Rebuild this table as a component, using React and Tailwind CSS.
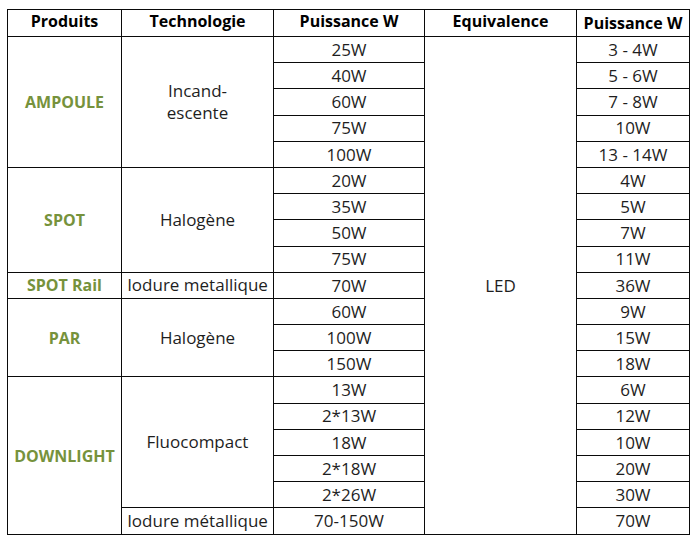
import React from 'react';

const groups = [
  {
    name: 'AMPOULE',
    span: 'row-span-5',
    tech: [{ label: 'Incand-\nescente', span: 'row-span-5' }],
    rows: [
      ['25W', '3 - 4W'],
      ['40W', '5 - 6W'],
      ['60W', '7 - 8W'],
      ['75W', '10W'],
      ['100W', '13 - 14W'],
    ],
  },
  {
    name: 'SPOT',
    span: 'row-span-4',
    tech: [{ label: 'Halogène', span: 'row-span-4' }],
    rows: [
      ['20W', '4W'],
      ['35W', '5W'],
      ['50W', '7W'],
      ['75W', '11W'],
    ],
  },
  {
    name: 'SPOT Rail',
    span: 'row-span-1',
    tech: [{ label: 'Iodure metallique', span: 'row-span-1' }],
    rows: [['70W', '36W']],
  },
  {
    name: 'PAR',
    span: 'row-span-3',
    tech: [{ label: 'Halogène', span: 'row-span-3' }],
    rows: [
      ['60W', '9W'],
      ['100W', '15W'],
      ['150W', '18W'],
    ],
  },
  {
    name: 'DOWNLIGHT',
    span: 'row-span-6',
    tech: [
      { label: 'Fluocompact', span: 'row-span-5' },
      { label: 'Iodure métallique', span: 'row-span-1' },
    ],
    rows: [
      ['13W', '6W'],
      ['2*13W', '12W'],
      ['18W', '10W'],
      ['2*18W', '20W'],
      ['2*26W', '30W'],
      ['70-150W', '70W'],
    ],
  },
];

const cell = 'flex items-center justify-center text-center border-r border-b border-[#0a0a0a]';
const head = `${cell} font-bold text-[16px] text-black`;

function App() {
  const items = [];

  groups.forEach((g, gi) => {
    let techIndex = 0;
    let techLeft = 0;
    g.rows.forEach(([watt, led], ri) => {
      if (ri === 0) {
        items.push(
          <div key={`g${gi}`} className={`${cell} ${g.span} font-bold text-[#76923c] text-[16px]`}>
            {g.name}
          </div>
        );
      }
      if (techLeft === 0) {
        const t = g.tech[techIndex];
        items.push(
          <div key={`t${gi}-${techIndex}`} className={`${cell} ${t.span} whitespace-pre-line leading-[22px]`}>
            {t.label}
          </div>
        );
        techIndex += 1;
        techLeft = Number(t.span.replace('row-span-', ''));
      }
      techLeft -= 1;

      items.push(
        <div key={`w${gi}-${ri}`} className={cell}>
          {watt}
        </div>
      );
      if (gi === 0 && ri === 0) {
        items.push(
          <div key="led" className={`${cell} row-span-19`}>
            LED
          </div>
        );
      }
      items.push(
        <div key={`l${gi}-${ri}`} className={cell}>
          {led}
        </div>
      );
    });
  });

  return (
    <div className="w-[700px] h-[545px] bg-white pl-[7px] pt-[9px]" style={{ fontFamily: '"Open Sans", "Liberation Sans", sans-serif' }}>
      <div className="grid grid-cols-[114px_152px_151px_152px_113px] grid-rows-[27px_repeat(19,26.2px)] w-fit border-l border-t border-[#0a0a0a] text-[17px] text-[#1e1e1e]">
        <div className={`${head} pb-1`}>Produits</div>
        <div className={`${head} pb-1`}>Technologie</div>
        <div className={`${head} pb-1`}>Puissance W</div>
        <div className={`${head} pb-1`}>Equivalence</div>
        <div className={head}>Puissance W</div>
        {items}
      </div>
    </div>
  );
}

export default App;
